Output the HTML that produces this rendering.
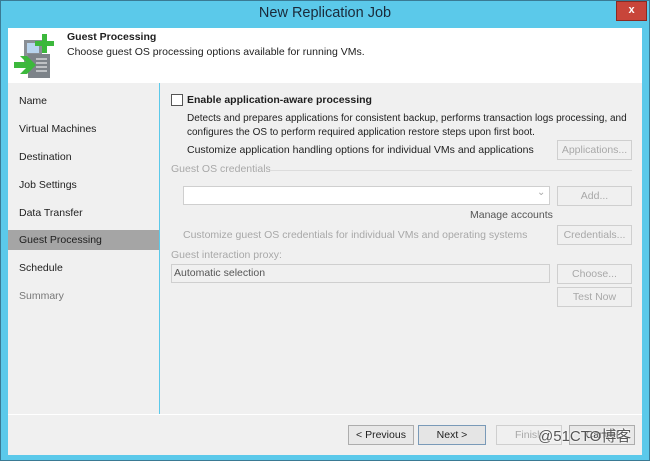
<!DOCTYPE html>
<html><head><style>
*{margin:0;padding:0;box-sizing:border-box}
body{width:650px;height:462px;background:#fff;font-family:"Liberation Sans",sans-serif;font-size:10.5px;color:#1e1e1e;position:relative;overflow:hidden;white-space:nowrap}
.abs{position:absolute}
.frame{left:0;top:0;width:650px;height:461px;background:#5bc9ea;border:1px solid #3a7a94}
.title{left:0;top:5px;width:650px;text-align:center;font-size:14.5px;color:#1a2a3a}
.close{left:616px;top:1px;width:31px;height:20px;background:#c8453a;border:1px solid #8a2a22;color:#fff;font-weight:bold;text-align:center;font-size:11px;line-height:17px}
.hdr{left:8px;top:28px;width:634px;height:55px;background:#fff}
.nav{left:8px;top:83px;width:151px;height:332px;background:#f0f0f0}
.main{left:160px;top:83px;width:482px;height:331px;background:#f0f0f0}
.bot{left:8px;top:415px;width:634px;height:40px;background:#f0f0f0}
.sep{left:8px;top:414px;width:634px;height:1px;background:#fff}
.ni{position:absolute;left:11px}
.btn{position:absolute;height:20px;border:1px solid #adadad;background:#e8e8e8;text-align:center;line-height:18px}
.dis{color:#a8a8a8;background:#f0f0f0;border-color:#cfcfcf}
.g{color:#a8a8a8}
</style></head><body>
<div class="abs frame"></div>
<div class="abs title">New Replication Job</div>
<div class="abs close">x</div>
<div class="abs hdr">
 <svg class="abs" style="left:4px;top:4px" width="44" height="48" viewBox="0 0 44 48">
  <rect x="12" y="8" width="18" height="22" fill="#8a8f95"/>
  <rect x="15" y="11" width="12" height="10" fill="#b8d4ee"/>
  <rect x="16" y="22" width="22" height="24" fill="#7d8389"/>
  <g stroke="#fff" stroke-width="1"><line x1="24" y1="27" x2="35" y2="27"/><line x1="24" y1="31" x2="35" y2="31"/><line x1="24" y1="35" x2="35" y2="35"/><line x1="24" y1="39" x2="35" y2="39"/></g>
  <path d="M30 2h5v7h7v5h-7v7h-5v-7h-7v-5h7z" fill="#3cb83c"/>
  <path d="M2 30h12l-6-6h7l9 9-9 9h-7l6-6H2z" fill="#3cb83c"/>
 </svg>
 <div class="abs" style="left:59px;top:3px;font-weight:bold">Guest Processing</div>
 <div class="abs" style="left:59px;top:18px">Choose guest OS processing options available for running VMs.</div>
</div>
<div class="abs nav">
 <div class="ni" style="top:12px">Name</div>
 <div class="ni" style="top:40px">Virtual Machines</div>
 <div class="ni" style="top:68px">Destination</div>
 <div class="ni" style="top:96px">Job Settings</div>
 <div class="ni" style="top:124px">Data Transfer</div>
 <div style="position:absolute;left:0;top:147px;width:151px;height:20px;background:#a5a5a5"></div>
 <div class="ni" style="top:151px">Guest Processing</div>
 <div class="ni" style="top:179px">Schedule</div>
 <div class="ni" style="top:207px;color:#777">Summary</div>
</div>
<div class="abs sep"></div>
<div class="abs main">
 <div class="abs" style="left:11px;top:11px;width:12px;height:12px;border:1px solid #555;background:#fff"></div>
 <div class="abs" style="left:27px;top:11px;font-weight:bold">Enable application-aware processing</div>
 <div class="abs" style="left:27px;top:29px;line-height:14px;font-size:10px">Detects and prepares applications for consistent backup, performs transaction logs processing, and<br>configures the OS to perform required application restore steps upon first boot.</div>
 <div class="abs" style="left:27px;top:61px">Customize application handling options for individual VMs and applications</div>
 <div class="btn dis" style="left:397px;top:57px;width:75px">Applications...</div>
 <div class="abs g" style="left:11px;top:80px">Guest OS credentials</div>
 <div class="abs" style="left:110px;top:87px;width:362px;height:1px;background:#dcdcdc"></div>
 <div class="abs" style="left:23px;top:103px;width:367px;height:19px;background:#fff;border:1px solid #cfcfcf"></div>
 <div class="abs g" style="left:377px;top:104px;font-size:10px">&#8964;</div>
 <div class="abs" style="left:310px;top:126px;color:#555">Manage accounts</div>
 <div class="btn dis" style="left:397px;top:103px;width:75px">Add...</div>
 <div class="abs g" style="left:23px;top:146px">Customize guest OS credentials for individual VMs and operating systems</div>
 <div class="btn dis" style="left:397px;top:142px;width:75px">Credentials...</div>
 <div class="abs g" style="left:11px;top:166px">Guest interaction proxy:</div>
 <div class="abs" style="left:11px;top:181px;width:379px;height:19px;border:1px solid #cfcfcf;padding:2px 2px;color:#555">Automatic selection</div>
 <div class="btn dis" style="left:397px;top:181px;width:75px">Choose...</div>
 <div class="btn dis" style="left:397px;top:204px;width:75px">Test Now</div>
</div>
<div class="abs bot">
 <div class="btn" style="left:340px;top:10px;width:66px">&lt; Previous</div>
 <div class="btn" style="left:410px;top:10px;width:68px;background:#e5e5e5;border-color:#7a9ab8">Next &gt;</div>
 <div class="btn dis" style="left:488px;top:10px;width:66px">Finish</div>
 <div class="btn" style="left:561px;top:10px;width:66px">Cancel</div>
 <div class="abs" style="left:530px;top:10px;font-size:15px;color:#555;text-shadow:0 0 2px #fff,0 0 2px #fff;font-family:'Liberation Sans','Noto Sans CJK SC',sans-serif">@51CTO博客</div>
</div>
</body></html>
